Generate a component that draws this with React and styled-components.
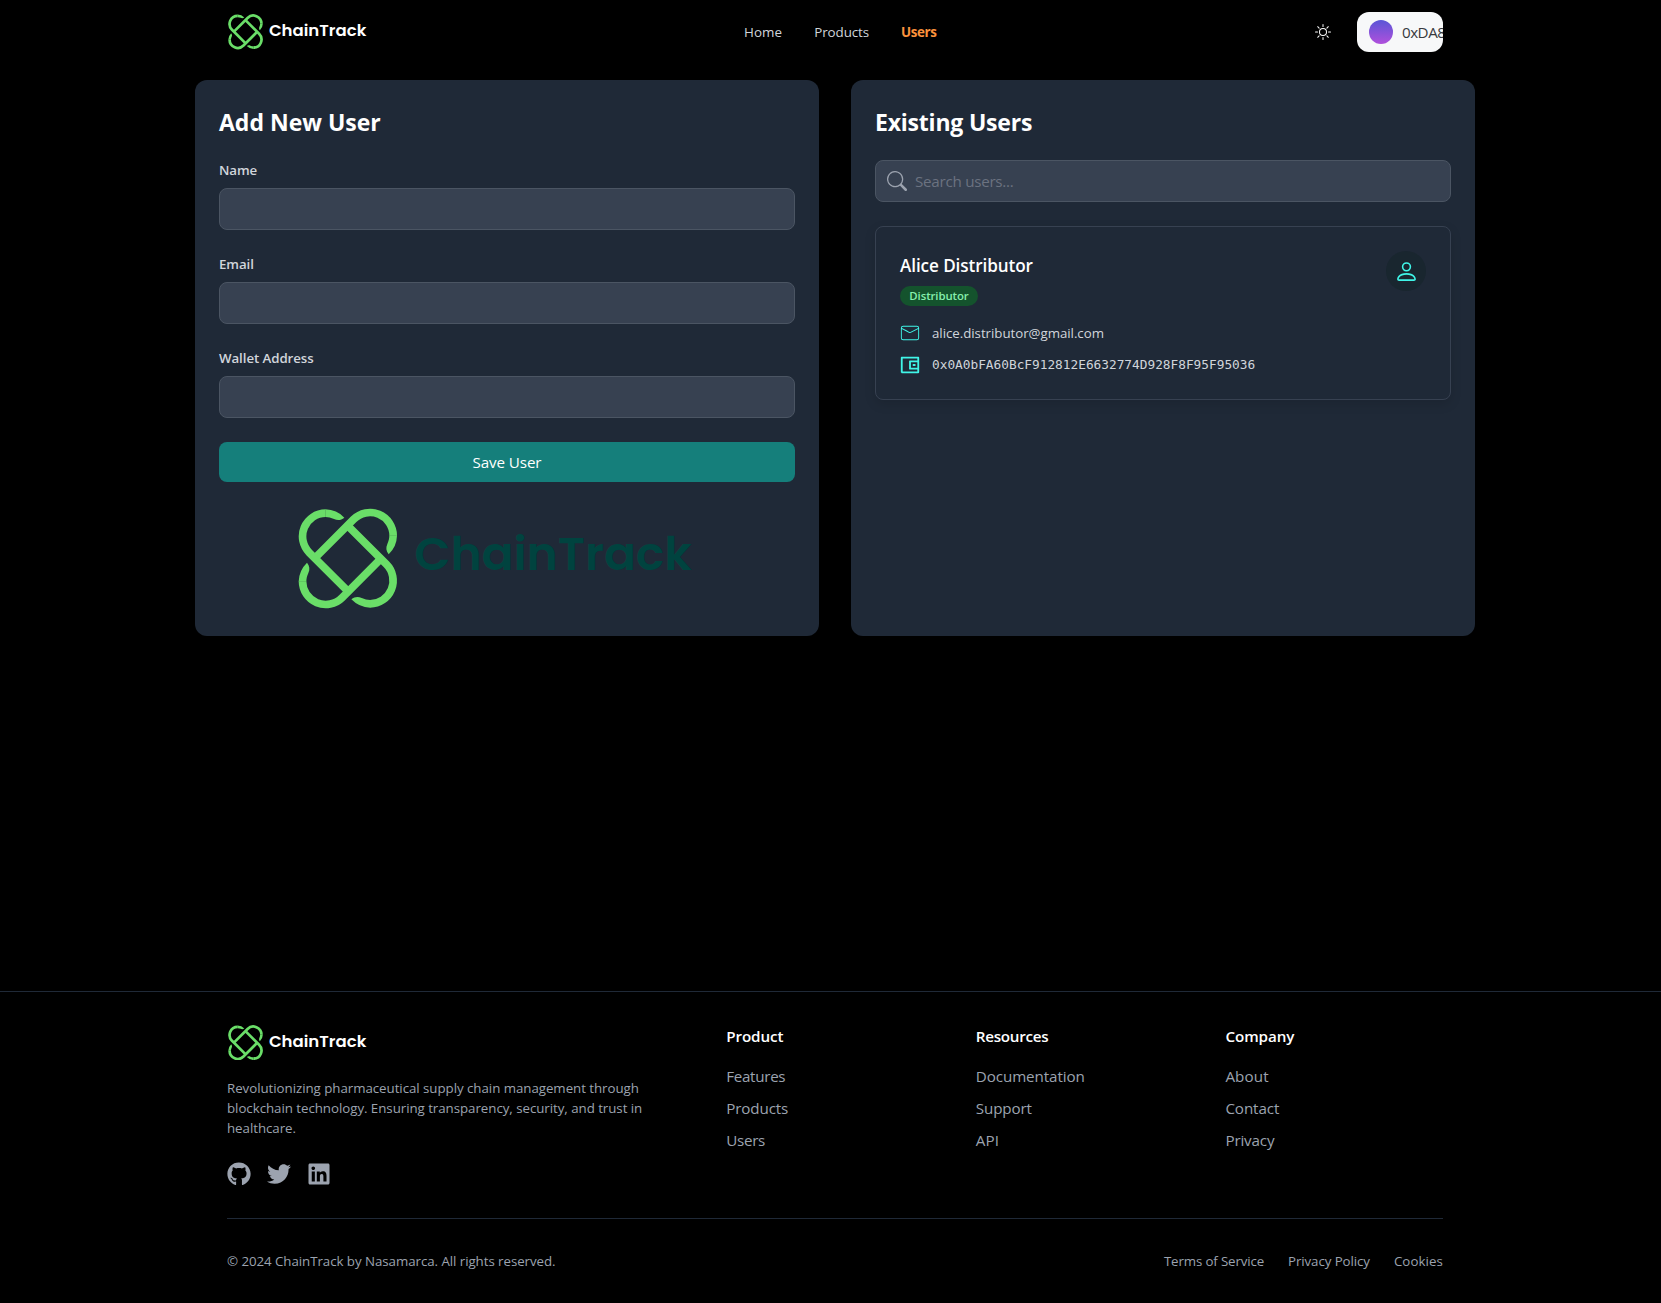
import React from "react";
import styled, { createGlobalStyle, css } from "styled-components";
import { BsPerson, BsSearch, BsSun } from "react-icons/bs";
import { CiMail } from "react-icons/ci";
import { RiWallet2Line } from "react-icons/ri";
import { FaGithub, FaLinkedin, FaTwitter } from "react-icons/fa";

const GlobalStyle = createGlobalStyle`
  *, *::before, *::after { box-sizing: border-box; }
  body {
    margin: 0;
    background: #000;
    color: #fff;
    font-family: "Segoe UI", "Open Sans", "Noto Sans", sans-serif;
    font-size: 15.2px;
    line-height: 24px;
  }
  h2, h3, h4, p, ul { margin: 0; padding: 0; }
  ul { list-style: none; }
  a { color: inherit; text-decoration: none; }
  svg { display: block; flex-shrink: 0; }
`;

const tracked = css`
  letter-spacing: ${(p) => p.$track ?? -0.08}px;
`;

const Page = styled.div`
  display: flex;
  flex-direction: column;
  min-height: 1303px;
`;

/* ---------- Header ---------- */

const Header = styled.header`
  padding-left: 9px;
`;

const HeaderInner = styled.div`
  display: flex;
  align-items: center;
  justify-content: space-between;
  max-width: 1280px;
  height: 64px;
  margin: 0 auto;
  padding: 0 32px;
`;

const Nav = styled.nav`
  display: flex;
  gap: 32px;
  margin-left: 7px;
`;

const NavLink = styled.a`
  font-size: 13.4px;
  line-height: 20px;
  font-weight: ${(p) => (p.$active ? 700 : 400)};
  color: ${(p) => (p.$active ? "#fb923c" : "#d1d5db")};
  ${tracked}
`;

const HeaderActions = styled.div`
  display: flex;
  align-items: center;
`;

const ThemeToggle = styled.button`
  display: flex;
  padding: 8px;
  margin-right: 18px;
  border: 0;
  background: none;
  color: #fff;
  font-size: 16px;
`;

const WalletButton = styled.button`
  display: flex;
  align-items: center;
  gap: 9px;
  width: 86px;
  height: 40px;
  padding: 0 12px;
  overflow: hidden;
  border: 0;
  border-radius: 12px;
  background: #f7f8f9;
  color: #373a3e;
  font: 400 15.2px/24px "Segoe UI", "Open Sans", sans-serif;
  letter-spacing: -0.5px;
  white-space: nowrap;
`;

const Avatar = styled.span`
  flex: none;
  width: 24px;
  height: 24px;
  border-radius: 50%;
  background: linear-gradient(180deg, #5a55d6, #b050dc);
`;

/* ---------- Logo ---------- */

const LogoSvg = styled.svg`
  width: ${(p) => p.$width}px;
  height: ${(p) => (p.$width * 302) / 1182}px;
`;

const LogoText = styled.text`
  font-family: Poppins, Inter, sans-serif;
  font-size: 140px;
  font-weight: 600;
  font-feature-settings: "cv11";
`;

const LOOPS = [
  "translate(269 137)",
  "translate(269 272) rotate(90)",
  "translate(136 274) rotate(180)",
  "translate(136 139) rotate(-90)",
];

function Logo({ width, color, baseline = 241 }) {
  return (
    <LogoSvg $width={width} viewBox="53 54 1182 302" role="img" aria-label="ChainTrack">
      {LOOPS.map((transform) => (
        <g key={transform} transform={transform}>
          <path
            d="M-165.5 67.5 L-49.1 -49.1 A69.5 69.5 0 0 1 69.5 0"
            fill="none"
            stroke="#6ade68"
            strokeWidth="23"
          />
          <path
            d="M81 -0.5 A81 81 0 0 1 56 56 C48 46 47 36 52 25 C56 16 58 8 58 -0.5 Z"
            fill="#6ade68"
          />
        </g>
      ))}
      <LogoText x="402" y={baseline} textLength="832" lengthAdjust="spacingAndGlyphs" fill={color}>
        ChainTrack
      </LogoText>
    </LogoSvg>
  );
}

const HeaderLogo = styled.div`
  padding-left: 1px;
`;

/* ---------- Main ---------- */

const Main = styled.main`
  flex: 1;
  padding: 16px 0 0 9px;
`;

const Columns = styled.div`
  display: grid;
  grid-template-columns: 1fr 1fr;
  gap: 32px;
  max-width: 1280px;
  height: 556px;
  margin: 0 auto;
`;

const Panel = styled.section`
  padding: 24px;
  border-radius: 12px;
  background: #1f2937;
`;

const PanelTitle = styled.h2`
  margin-bottom: 22px;
  padding-top: 2px;
  font-size: 23px;
  line-height: 32px;
  font-weight: 700;
  ${tracked}
`;

const Form = styled.form`
  display: flex;
  flex-direction: column;
  gap: 24px;
`;

const Field = styled.label`
  display: flex;
  flex-direction: column;
  gap: 8px;
`;

const FieldLabel = styled.span`
  font-size: 13.3px;
  line-height: 20px;
  font-weight: 600;
  color: #d1d5db;
  ${tracked}
`;

const Input = styled.input`
  width: 100%;
  height: 42px;
  padding: 8px 12px;
  border: 1px solid #4b5563;
  border-radius: 8px;
  background: #374151;
  color: #fff;
  outline: none;
`;

const SaveButton = styled.button`
  height: 40px;
  border: 0;
  border-radius: 8px;
  background: #157f7b;
  color: #fff;
  font: 400 15.2px/24px "Segoe UI", "Open Sans", sans-serif;
  letter-spacing: -0.1px;
`;

const Illustration = styled.div`
  display: flex;
  padding: 26px 0 0 78.5px;
`;

const SearchBox = styled.label`
  display: flex;
  align-items: center;
  gap: 8px;
  height: 42px;
  padding: 0 11px;
  border: 1px solid #4b5563;
  border-radius: 8px;
  background: #374151;
  color: #9ca3af;
  font-size: 20px;
`;

const SearchInput = styled.input`
  flex: 1;
  padding: 0;
  border: 0;
  background: none;
  outline: none;
  color: #fff;
  font: 400 15.2px/24px "Segoe UI", "Open Sans", sans-serif;
  letter-spacing: -0.27px;
  &::placeholder {
    color: #6b7280;
    opacity: 1;
  }
`;

const UserCard = styled.article`
  display: flex;
  align-items: flex-start;
  justify-content: space-between;
  height: 174px;
  margin-top: 24px;
  padding: 24px;
  border: 1px solid #374151;
  border-radius: 8px;
  box-shadow: 0 4px 12px rgba(0, 0, 0, 0.12);
`;

const UserName = styled.h3`
  padding-top: 1px;
  font-size: 17.1px;
  line-height: 28px;
  font-weight: 600;
  ${tracked}
`;

const Badge = styled.span`
  display: block;
  width: 78px;
  height: 20px;
  margin: 6px 0 17px;
  border-radius: 10px;
  background: #14532d;
  color: #86efac;
  font-size: 11.4px;
  line-height: 20px;
  font-weight: 600;
  text-align: center;
  letter-spacing: -0.1px;
`;

const Details = styled.ul`
  display: flex;
  flex-direction: column;
  gap: 12px;
`;

const Detail = styled.li`
  display: flex;
  align-items: center;
  gap: 12px;
  height: 20px;
  color: #d1d5db;
  font-size: ${(p) => (p.$mono ? 12.8 : 13.3)}px;
  line-height: 20px;
  letter-spacing: ${(p) => (p.$mono ? -0.01 : -0.04)}px;
  ${(p) => p.$mono && css`font-family: Consolas, "DejaVu Sans Mono", monospace;`}
`;

const DetailIcon = styled.span`
  display: flex;
  align-items: center;
  justify-content: center;
  width: 20px;
  height: 20px;
  color: #40f5e8;
  font-size: 22px;
`;

const PersonCircle = styled.div`
  display: flex;
  align-items: center;
  justify-content: center;
  width: 40px;
  height: 40px;
  border-radius: 50%;
  background: #19262f;
  color: #40f5e8;
  font-size: 25px;
`;

/* ---------- Footer ---------- */

const Footer = styled.footer`
  padding-left: 9px;
  border-top: 1px solid #1f2937;
`;

const FooterInner = styled.div`
  max-width: 1280px;
  margin: 0 auto;
  padding: 32px;
`;

const FooterGrid = styled.div`
  display: grid;
  grid-template-columns: repeat(5, 1fr);
  gap: 32px;
  height: 194px;
`;

const Brand = styled.div`
  grid-column: span 2;
`;

const BrandLogo = styled.div`
  height: 54px;
  padding: 1px 0 0 1px;
`;

const Tagline = styled.p`
  width: 430px;
  color: #9ca3af;
  font-size: 13.3px;
  line-height: 20px;
  letter-spacing: -0.04px;
`;

const Socials = styled.div`
  display: flex;
  gap: 16px;
  margin-top: 24px;
  color: #9ca3af;
  font-size: 24px;
`;

const LinkColumn = styled.div`
  display: flex;
  flex-direction: column;
  gap: 16px;
`;

const ColumnTitle = styled.h4`
  font-size: 15.2px;
  font-weight: 600;
  ${tracked}
`;

const LinkList = styled.ul`
  display: flex;
  flex-direction: column;
  gap: 8px;
`;

const FooterLink = styled.li`
  color: #9ca3af;
  ${tracked}
`;

const Legal = styled.div`
  display: flex;
  justify-content: space-between;
  padding-top: 32px;
  border-top: 1px solid #1f2937;
  color: #9ca3af;
  font-size: 13.3px;
  line-height: 20px;
  letter-spacing: -0.05px;
`;

const LegalLinks = styled.div`
  display: flex;
  gap: 24px;
`;

const LegalLink = styled.a`
  ${tracked}
`;

const FIELDS = ["Name", "Email", "Wallet Address"];

const LINK_GROUPS = [
  { title: "Product", links: [["Features", -0.3], ["Products", -0.12], ["Users", -0.3]] },
  { title: "Resources", track: -0.26, links: [["Documentation", -0.1], ["Support", -0.15], ["API", 0.1]] },
  { title: "Company", links: [["About", 0.1], ["Contact", -0.1], ["Privacy", -0.15]] },
];

export default function App() {
  return (
    <Page>
      <GlobalStyle />
      <Header>
        <HeaderInner>
          <HeaderLogo>
            <Logo width={138.5} color="#fff" baseline={238} />
          </HeaderLogo>
          <Nav>
            <NavLink href="#" $track={0.1}>Home</NavLink>
            <NavLink href="#">Products</NavLink>
            <NavLink href="#" $active $track={-0.4}>Users</NavLink>
          </Nav>
          <HeaderActions>
            <ThemeToggle aria-label="Toggle theme">
              <BsSun />
            </ThemeToggle>
            <WalletButton>
              <Avatar />
              0xDA8
            </WalletButton>
          </HeaderActions>
        </HeaderInner>
      </Header>

      <Main>
        <Columns>
          <Panel>
            <PanelTitle $track={0}>Add New User</PanelTitle>
            <Form>
              {FIELDS.map((name) => (
                <Field key={name}>
                  <FieldLabel>{name}</FieldLabel>
                  <Input />
                </Field>
              ))}
              <SaveButton type="button">Save User</SaveButton>
            </Form>
            <Illustration>
              <Logo width={394} color="#00433f" />
            </Illustration>
          </Panel>

          <Panel>
            <PanelTitle $track={-0.2}>Existing Users</PanelTitle>
            <SearchBox>
              <BsSearch />
              <SearchInput placeholder="Search users..." />
            </SearchBox>
            <UserCard>
              <div>
                <UserName>Alice Distributor</UserName>
                <Badge>Distributor</Badge>
                <Details>
                  <Detail>
                    <DetailIcon><CiMail /></DetailIcon>
                    alice.distributor@gmail.com
                  </Detail>
                  <Detail $mono>
                    <DetailIcon><RiWallet2Line /></DetailIcon>
                    0x0A0bFA60BcF912812E6632774D928F8F95F95036
                  </Detail>
                </Details>
              </div>
              <PersonCircle>
                <BsPerson />
              </PersonCircle>
            </UserCard>
          </Panel>
        </Columns>
      </Main>

      <Footer>
        <FooterInner>
          <FooterGrid>
            <Brand>
              <BrandLogo>
                <Logo width={138.5} color="#fff" baseline={238} />
              </BrandLogo>
              <Tagline>
                Revolutionizing pharmaceutical supply chain management through
                blockchain technology. Ensuring transparency, security, and trust in
                healthcare.
              </Tagline>
              <Socials>
                <FaGithub />
                <FaTwitter />
                <FaLinkedin />
              </Socials>
            </Brand>
            {LINK_GROUPS.map((group) => (
              <LinkColumn key={group.title}>
                <ColumnTitle $track={group.track}>{group.title}</ColumnTitle>
                <LinkList>
                  {group.links.map(([label, track]) => (
                    <FooterLink key={label} $track={track}>
                      <a href="#">{label}</a>
                    </FooterLink>
                  ))}
                </LinkList>
              </LinkColumn>
            ))}
          </FooterGrid>
          <Legal>
            <p>© 2024 ChainTrack by Nasamarca. All rights reserved.</p>
            <LegalLinks>
              <LegalLink href="#" $track={-0.14}>Terms of Service</LegalLink>
              <LegalLink href="#">Privacy Policy</LegalLink>
              <LegalLink href="#" $track={0.08}>Cookies</LegalLink>
            </LegalLinks>
          </Legal>
        </FooterInner>
      </Footer>
    </Page>
  );
}
